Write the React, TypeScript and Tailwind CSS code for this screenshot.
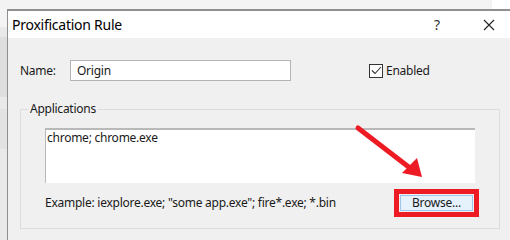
import React from 'react'

const font = { fontFamily: '"Noto Sans", "Open Sans", sans-serif' }

const App = () => {
  return (
    <div className='w-[510px] h-[240px] bg-[#f0f0f0] flex flex-col overflow-hidden relative text-[12px] tracking-[-0.25px] text-[#1a1a1a]' style={font}>
      {/* window behind the dialog */}
      <div className='h-[9px] flex shrink-0'>
        <div className='flex-1 bg-[#f3f3f3]' />
        <div className='w-[18px] bg-white' />
      </div>

      <div className='flex flex-1'>
        <div className='w-[7px] bg-[#e9e9e9] flex flex-col'>
          <div className='h-[18px] bg-[#f4f4f4]' />
          <div className='h-[60px] mt-[10px] bg-[#dedede]' />
          <div className='h-[40px] mt-[12px] bg-[#e2e2e2]' />
        </div>

        {/* dialog */}
        <div className='flex-1 flex flex-col border-t-2 border-l border-[#8f8f8f]'>
          <div className='h-[27px] bg-white flex items-center pl-[4px] shrink-0'>
            <span className='text-[14px] text-black'>Proxification Rule</span>
            <span className='ml-auto text-[14px] text-[#333] w-[14px] text-center'>?</span>
            <span className='ml-[38px] mr-[14px] w-[14px] flex items-center justify-center'>
              <svg width='12' height='12' viewBox='0 0 12 12'>
                <path d='M1 1 L11 11 M11 1 L1 11' stroke='#222' strokeWidth='1.1' />
              </svg>
            </span>
          </div>

          <div className='flex-1 pl-[12px]'>
            <div className='flex items-center mt-[22px]'>
              <span className='w-[50px]'>Name:</span>
              <div className='w-[221px] h-[21px] bg-white border border-[#b4b4b4] flex items-center pl-[6px]'>Origin</div>
              <div className='ml-[78px] w-[14px] h-[14px] border border-[#333] bg-white flex items-center justify-center'>
                <svg width='11' height='9' viewBox='0 0 11 9'>
                  <path d='M1 4.5 L4 7.5 L10 1' stroke='#333' strokeWidth='1.1' fill='none' />
                </svg>
              </div>
              <span className='ml-[3px]'>Enabled</span>
            </div>

            <fieldset className='mt-[20px] w-[480px] h-[128px] border border-[#dcdcdc] pl-[24px] pr-[20px]'>
              <legend className='ml-[-17px] px-[2px] leading-[16px]'>Applications</legend>
              <div className='mt-[11px] w-[430px] h-[55px] bg-white border-t-2 border-l border-[#b9b9b9] pl-[1px] leading-[16px]'>chrome; chrome.exe</div>
              <div className='flex items-center mt-[6px]'>
                <span>Example: iexplore.exe; "some app.exe"; fire*.exe; *.bin</span>
                <div className='ml-auto w-[85px] h-[28px] border-[5px] border-[#ed1c24] flex'>
                  <button className='flex-1 m-[1px] bg-[#e5f1fb] border border-[#9cc6ee] text-[12px] text-[#1a1a1a] leading-none'>Browse...</button>
                </div>
              </div>
            </fieldset>
          </div>
        </div>
      </div>

      {/* red annotation arrow */}
      <svg className='absolute left-0 top-0 pointer-events-none' width='510' height='240' viewBox='0 0 510 240'>
        <line x1='358' y1='128' x2='410' y2='168' stroke='#ed1c24' strokeWidth='5' strokeLinecap='round' />
        <polygon points='422,177 402,173 417,158' fill='#ed1c24' />
      </svg>
    </div>
  )
}

export default App
